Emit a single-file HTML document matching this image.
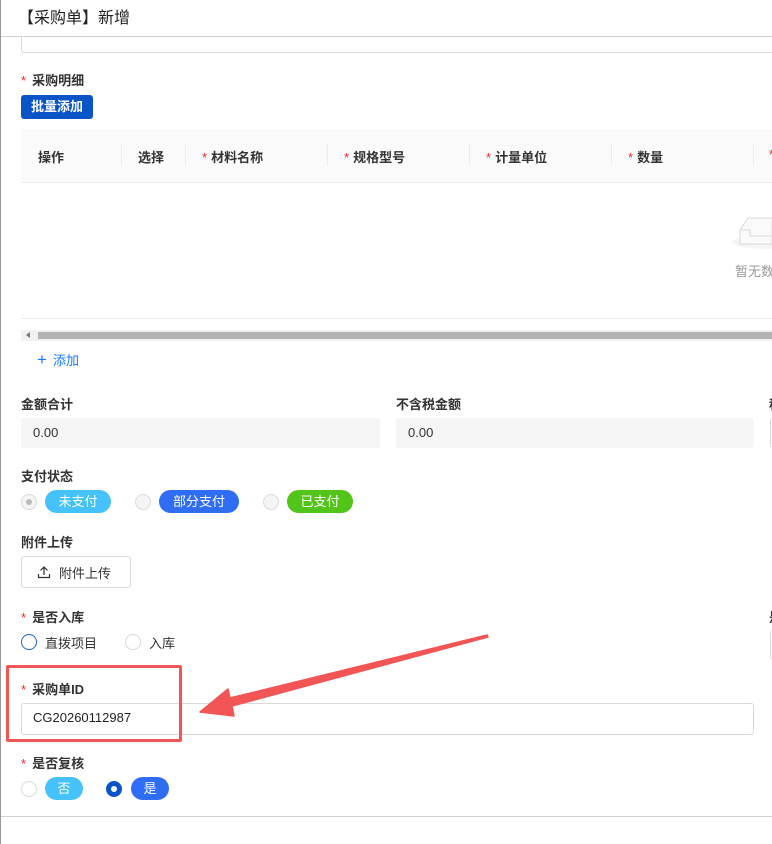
<!DOCTYPE html>
<html><head><meta charset="utf-8"><style>
*{box-sizing:border-box;margin:0;padding:0}
body{width:772px;height:844px;overflow:hidden;background:#fff;position:relative;font-family:"Liberation Sans","Noto Sans CJK SC",sans-serif;color:#222;font-size:13px}
.a{position:absolute;white-space:nowrap}
.lb{font-weight:bold;font-size:13px;color:#333}
.st{color:#f5222d;margin-right:6px;font-weight:normal}
.inp{position:absolute;border:1px solid #d9d9d9;border-radius:3px;background:#fff}
.dis{background:#f5f5f5;border:none}
.tag{position:absolute;height:23px;border-radius:12px;color:#fff;font-size:13px;line-height:23px;text-align:center}
.rd{position:absolute;width:16px;height:16px;border-radius:50%;border:1px solid #d9d9d9;background:#f5f5f5}
.th{position:absolute;top:147px;font-weight:bold;font-size:13px;color:#333}
.sep{position:absolute;top:144px;width:1px;height:22px;background:#ececec}
</style></head><body>
<div class="a" style="left:0;top:0;width:1px;height:844px;background:#999"></div>
<div class="a" style="left:18px;top:4px;font-size:16px;color:#222">【采购单】新增</div>
<div class="a" style="left:1px;top:36px;width:771px;height:1px;background:#d0d0d0"></div>
<div class="a" style="left:21px;top:36px;width:760px;height:17px;border:1px solid #d9d9d9;border-top:none;border-radius:0 0 3px 3px"></div>

<div class="a lb" style="left:21px;top:70px"><span class="st">*</span>采购明细</div>
<div class="a" style="left:21px;top:95px;width:72px;height:24px;background:#0a54c8;border-radius:3px;color:#fff;font-weight:bold;font-size:13px;line-height:24px;text-align:center">批量添加</div>

<div class="a" style="left:21px;top:129px;width:751px;height:54px;background:#fafafa;border-bottom:1px solid #ececec"></div>
<div class="th" style="left:38px">操作</div><div class="sep" style="left:121px"></div>
<div class="th" style="left:138px">选择</div><div class="sep" style="left:185px"></div>
<div class="th" style="left:202px"><span class="st" style="margin-right:4px">*</span>材料名称</div><div class="sep" style="left:327px"></div>
<div class="th" style="left:344px"><span class="st" style="margin-right:4px">*</span>规格型号</div><div class="sep" style="left:469px"></div>
<div class="th" style="left:486px"><span class="st" style="margin-right:4px">*</span>计量单位</div><div class="sep" style="left:611px"></div>
<div class="th" style="left:628px"><span class="st" style="margin-right:4px">*</span>数量</div><div class="sep" style="left:753px"></div>
<div class="th" style="left:769px"><span class="st">*</span></div>
<svg class="a" style="left:730px;top:208px" width="42" height="42"><ellipse cx="40" cy="34" rx="38" ry="7" fill="#f5f5f5"/><path d="M10 22 L18 10 H42 V36 H10 Z" fill="#fafafa" stroke="#d9d9d9"/><path d="M10 22 H20 V28 H42" fill="none" stroke="#d9d9d9"/></svg>
<div class="a" style="left:735px;top:261px;color:#999;font-size:13px">暂无数据</div>
<div class="a" style="left:21px;top:318px;width:751px;height:1px;background:#ececec"></div>
<div class="a" style="left:21px;top:330px;width:751px;height:11px;background:#f1f1f1"></div>
<div class="a" style="left:38px;top:332px;width:734px;height:7px;background:#b3b3b3"></div>
<div class="a" style="left:26px;top:332px;width:0;height:0;border-top:3px solid transparent;border-bottom:3px solid transparent;border-right:4px solid #777"></div>
<div class="a" style="left:37px;top:350px;color:#1677ff;font-size:13px"><span style="font-size:17px;margin-right:6px">+</span>添加</div>

<div class="a lb" style="left:21px;top:394px">金额合计</div>
<div class="inp dis" style="left:21px;top:418px;width:359px;height:30px"></div>
<div class="a" style="left:33px;top:425px;color:#333">0.00</div>
<div class="a lb" style="left:396px;top:394px">不含税金额</div>
<div class="inp dis" style="left:396px;top:418px;width:358px;height:30px"></div>
<div class="a" style="left:408px;top:425px;color:#333">0.00</div>
<div class="a lb" style="left:769px;top:394px">税</div>
<div class="inp" style="left:770px;top:418px;width:10px;height:30px"></div>

<div class="a lb" style="left:21px;top:466px">支付状态</div>
<div class="rd" style="left:21px;top:494px"><div style="position:absolute;left:4px;top:4px;width:6px;height:6px;border-radius:50%;background:#bbb"></div></div>
<div class="tag" style="left:45px;top:490px;width:66px;background:#45c2fa">未支付</div>
<div class="rd" style="left:135px;top:494px"></div>
<div class="tag" style="left:159px;top:490px;width:80px;background:#2f6df5">部分支付</div>
<div class="rd" style="left:263px;top:494px"></div>
<div class="tag" style="left:287px;top:490px;width:66px;background:#52c41a">已支付</div>

<div class="a lb" style="left:21px;top:532px">附件上传</div>
<div class="inp" style="left:21px;top:556px;width:110px;height:32px"></div>
<svg class="a" style="left:37px;top:565px" width="14" height="14"><path d="M7 2V10M3.5 5.5L7 2L10.5 5.5M1.5 9V12.5H12.5V9" fill="none" stroke="#333" stroke-width="1.2"/></svg>
<div class="a" style="left:59px;top:563px;color:#333">附件上传</div>

<div class="a lb" style="left:21px;top:607px"><span class="st">*</span>是否入库</div>
<div class="rd" style="left:21px;top:634px;background:#fff;border-color:#1f5fd0;border-width:1.5px"></div>
<div class="a" style="left:45px;top:633px;color:#333">直拨项目</div>
<div class="rd" style="left:125px;top:634px;background:#fff"></div>
<div class="a" style="left:149px;top:633px;color:#333">入库</div>
<div class="a lb" style="left:769px;top:607px">是</div>
<div class="inp" style="left:770px;top:630px;width:10px;height:30px"></div>

<div class="a lb" style="left:21px;top:679px"><span class="st">*</span>采购单ID</div>
<div class="inp" style="left:21px;top:703px;width:733px;height:32px"></div>
<div class="a" style="left:33px;top:710px;color:#222">CG20260112987</div>
<div class="a" style="left:6px;top:665px;width:176px;height:77px;border:3.5px solid #f25555;border-radius:2px"></div>

<div class="a lb" style="left:21px;top:753px"><span class="st">*</span>是否复核</div>
<div class="rd" style="left:21px;top:781px;background:#fff"></div>
<div class="tag" style="left:45px;top:777px;width:38px;background:#45c2fa">否</div>
<div class="rd" style="left:106px;top:781px;background:#0a54c8;border-color:#0a54c8"><div style="position:absolute;left:4px;top:4px;width:6px;height:6px;border-radius:50%;background:#fff"></div></div>
<div class="tag" style="left:131px;top:777px;width:38px;background:#2f6df5">是</div>
<div class="a" style="left:1px;top:816px;width:771px;height:1px;background:#d0d0d0"></div>

<svg class="a" style="left:0;top:0" width="772" height="844"><path d="M487 635 L488 637 L232 706 L234 716 L200 712 L228 689 L230 698 Z" fill="#f25555" stroke="#f25555" stroke-width="1.5" stroke-linejoin="round"/></svg>
</body></html>
